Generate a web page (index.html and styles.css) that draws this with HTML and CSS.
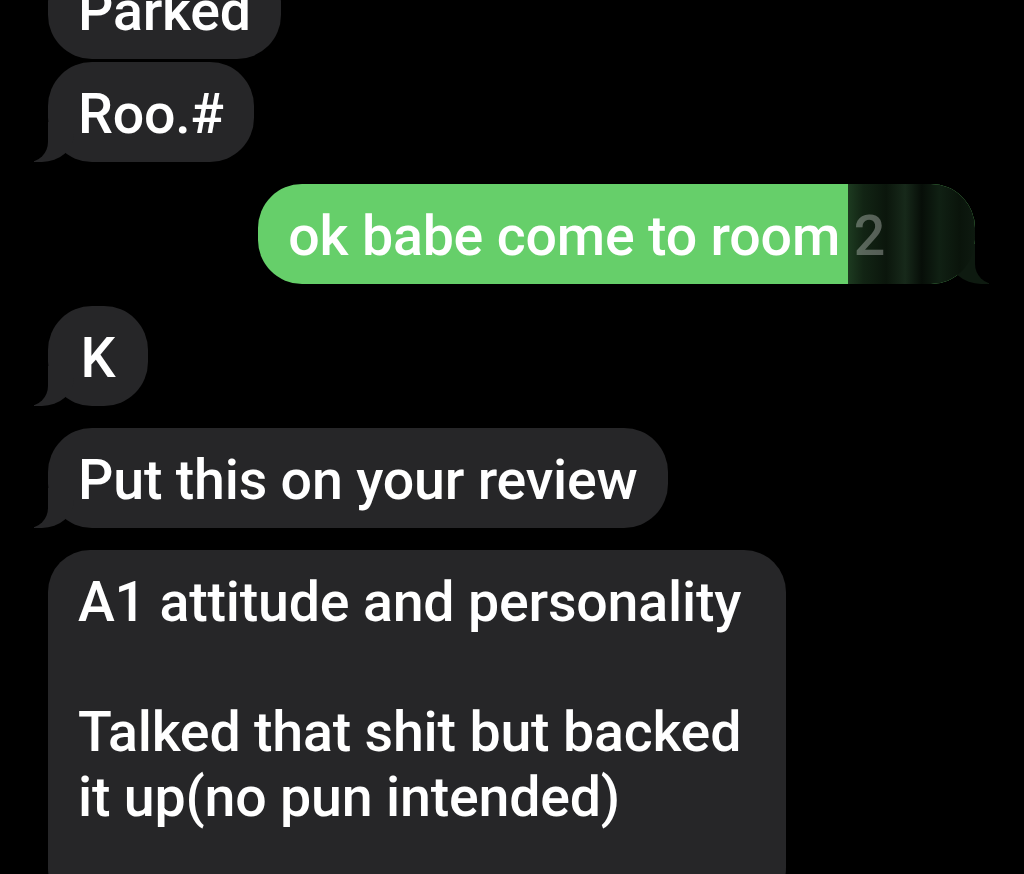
FILE: index.html
```html
<!DOCTYPE html>
<html lang="en">
<head>
    <meta charset="UTF-8">
    <meta name="viewport" content="width=device-width, initial-scale=1.0">
    <title>Messages</title>
    <link rel="stylesheet" href="styles.css">
</head>
<body>
    <div class="thread">
        <div class="group">
            <p class="bubble received">Parked</p>
            <p class="bubble received tail">Roo.#</p>
        </div>

        <p class="bubble sent tail">ok babe come to room <span class="hidden-num">2</span><span class="scribble"></span></p>

        <p class="bubble received tail single">K</p>

        <p class="bubble received tail">Put this on your review</p>

        <p class="bubble received long">A1 attitude and personality

Talked that shit but backed it up(no pun intended)
</p>
    </div>
</body>
</html>
```

FILE: styles.css
```css
html, body {
    height: 100%;
    overflow: hidden;
}
body {
    margin: 0;
    background-color: #000;
    font-family: Roboto, "Liberation Sans", sans-serif;
    color: #fff;
}
.thread {
    display: flex;
    flex-direction: column;
    align-items: flex-start;
    gap: 22px;
    margin-top: -41px;
    padding: 0 49px 0 48px;
}
.group {
    display: flex;
    flex-direction: column;
    align-items: flex-start;
    gap: 3px;
}
.bubble {
    position: relative;
    margin: 0;
    padding: 19.5px 30px 15.5px;
    font-size: 55.5px;
    font-weight: 500;
    letter-spacing: -0.2px;
    line-height: 65px;
    border-radius: 44px;
    white-space: nowrap;
}
.received {
    background-color: #262628;
}
.sent {
    align-self: flex-end;
    background-color: #66cf6a;
    padding-right: 90px;
}
.single {
    min-width: 40px;
    text-align: center;
}
.long {
    white-space: pre-line;
    width: 678px;
    padding-bottom: 80px;
    border-radius: 42px;
}

/* tails */
.tail::before,
.tail::after {
    content: "";
    position: absolute;
    bottom: 0;
    height: 40px;
}
.received.tail::before {
    left: -14px;
    width: 40px;
    background-color: #262628;
    border-bottom-right-radius: 32px 28px;
}
.received.tail::after {
    left: -52px;
    width: 52px;
    background-color: #000;
    border-bottom-right-radius: 20px;
}
.sent.tail::before {
    right: -14px;
    width: 40px;
    background-color: #0e1a10;
    border-bottom-left-radius: 32px 28px;
}
.sent.tail::after {
    right: -52px;
    width: 52px;
    background-color: #000;
    border-bottom-left-radius: 20px;
}

/* blacked-out part of the sent message */
.scribble {
    position: absolute;
    top: 0;
    bottom: 0;
    left: 590px;
    right: 0;
    border-radius: 0 44px 44px 0;
    background: linear-gradient(90deg, #1d3b20 0%, #122414 12%, #0b160c 30%, #17291a 45%, #070e08 58%, #102013 72%, #0a140b 88%, #0e1a10 100%);
}
.hidden-num {
    position: relative;
    z-index: 1;
    color: rgba(255, 255, 255, 0.3);
}
```
